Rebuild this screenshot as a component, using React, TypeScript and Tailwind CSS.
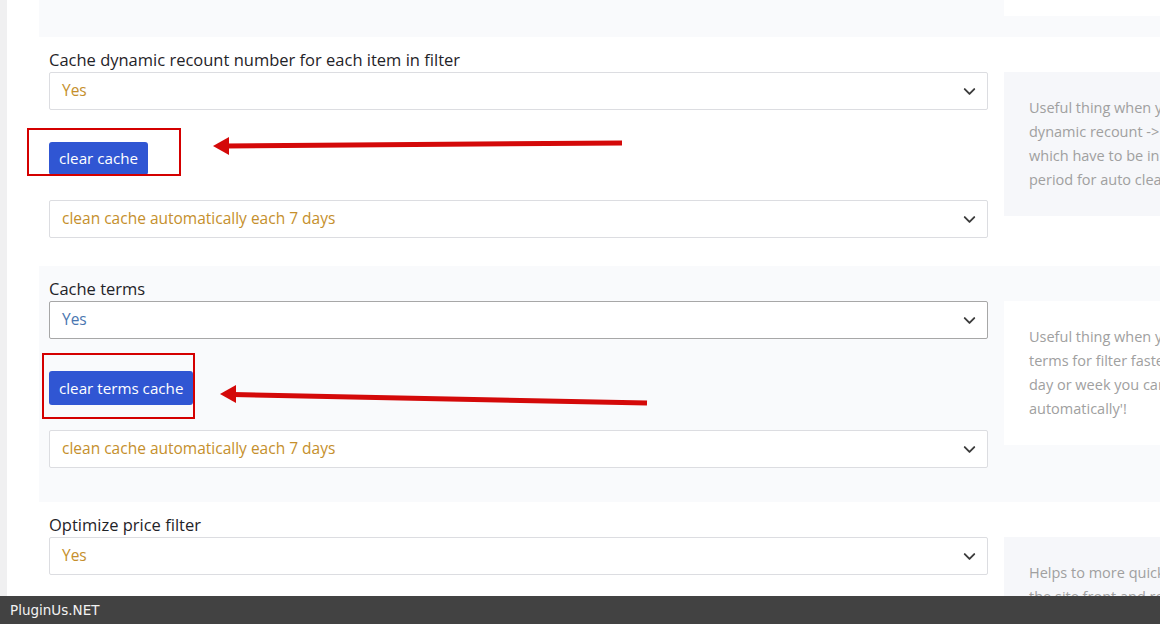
import { ChevronDown } from "lucide-react";

const font = { fontFamily: "'Open Sans', Lato, sans-serif" };

const Select = ({ value, tone = "gold", focused = false }: { value: string; tone?: "gold" | "blue"; focused?: boolean }) => (
  <div
    className={`flex h-[38px] items-center justify-between rounded-[2px] border bg-white pl-[12px] pr-[8px] text-[15.5px] ${
      focused ? "border-[#a7a7a7]" : "border-[#dcdde1]"
    } ${tone === "gold" ? "text-[#c58f2c]" : "text-[#4a76b0]"}`}
  >
    <span>{value}</span>
    <ChevronDown size={19} strokeWidth={2.4} className="text-[#3c3c3c]" />
  </div>
);

const Info = ({ lines, white = false }: { lines: string[]; white?: boolean }) => (
  <div className={`w-[420px] px-[25px] py-[24px] text-[14.5px] leading-[24px] text-[#a0a0a0] ${white ? "bg-white" : "bg-[#f6f7fa]"}`}>
    {lines.map((l) => (
      <div key={l} className="whitespace-nowrap">
        {l}
      </div>
    ))}
  </div>
);

const Label = ({ text }: { text: string }) => (
  <div className="text-[16.5px] leading-[24px] text-[#1f2328]">{text}</div>
);

export default function App() {
  return (
    <div className="relative h-[624px] w-[1160px] overflow-hidden bg-white" style={font}>
      <div className="flex h-full">
        <div className="w-[7px] shrink-0 bg-[#f0f0f1]" />
        <div className="ml-[32px] flex shrink-0 flex-col">
          {/* tail of previous section */}
          <div className="flex h-[37px] shrink-0 bg-[#f9fafc] px-[10px]">
            <div className="w-[939px]" />
            <div className="ml-[16px] h-[16px] w-[420px] bg-white" />
          </div>

          {/* cache dynamic recount */}
          <div className="flex shrink-0 px-[10px] pb-[28px] pt-[11px]">
            <div className="w-[939px]">
              <Label text="Cache dynamic recount number for each item in filter" />
              <Select value="Yes" />
              <div className="mt-[32px]">
                <button className="h-[33px] rounded-[3px] bg-[#3056d3] px-[10px] text-[15.2px] text-white">clear cache</button>
              </div>
              <div className="mt-[25px]">
                <Select value="clean cache automatically each 7 days" />
              </div>
            </div>
            <div className="ml-[16px] pt-[24px]">
              <Info
                lines={[
                  "Useful thing when you already set your site filter and have a lot of",
                  "dynamic recount -> the cache stores the counts of products",
                  "which have to be in filter items. Here you can select the",
                  "period for auto cleaning of the cache data.",
                ]}
              />
            </div>
          </div>

          {/* cache terms */}
          <div className="flex shrink-0 bg-[#f9fafc] px-[10px] pb-[34px] pt-[11px]">
            <div className="w-[939px]">
              <Label text="Cache terms" />
              <Select value="Yes" tone="blue" focused />
              <div className="mt-[32px]">
                <button className="h-[34px] rounded-[3px] bg-[#3056d3] px-[10px] text-[15.2px] text-white">clear terms cache</button>
              </div>
              <div className="mt-[25px]">
                <Select value="clean cache automatically each 7 days" />
              </div>
            </div>
            <div className="ml-[16px] pt-[24px]">
              <Info
                white
                lines={[
                  "Useful thing when you already set your site and want to load",
                  "terms for filter faster. Select period of cleaning - each",
                  "day or week you can clean the cache 'clean cache",
                  "automatically'!",
                ]}
              />
            </div>
          </div>

          {/* optimize price filter */}
          <div className="flex shrink-0 px-[10px] pt-[11px]">
            <div className="w-[939px]">
              <Label text="Optimize price filter" />
              <Select value="Yes" />
            </div>
            <div className="ml-[16px] pt-[24px]">
              <Info lines={["Helps to more quickly search prices of products on", "the site front and reduce the load of the server"]} />
            </div>
          </div>
        </div>
      </div>

      {/* annotations */}
      <svg className="pointer-events-none absolute left-0 top-0" width="1160" height="624">
        <rect x="28" y="129" width="152" height="46" fill="none" stroke="#d40000" strokeWidth="2" />
        <line x1="622" y1="143" x2="226" y2="146" stroke="#d40909" strokeWidth="5" />
        <polygon points="213,146 229,137 229,155" fill="#d40909" />
        <rect x="43" y="354" width="151" height="64" fill="none" stroke="#d40000" strokeWidth="2" />
        <line x1="647" y1="403" x2="233" y2="394.5" stroke="#d40909" strokeWidth="5" />
        <polygon points="220,394 236,385 236,403" fill="#d40909" />
      </svg>

      <div
        className="absolute bottom-0 left-0 flex h-[28px] w-full items-center bg-[#424242] pl-[10px] text-[13.5px] text-[#f2f2f2]"
        style={{ fontFamily: "'DejaVu Sans', sans-serif" }}
      >
        PluginUs.NET
      </div>
    </div>
  );
}
